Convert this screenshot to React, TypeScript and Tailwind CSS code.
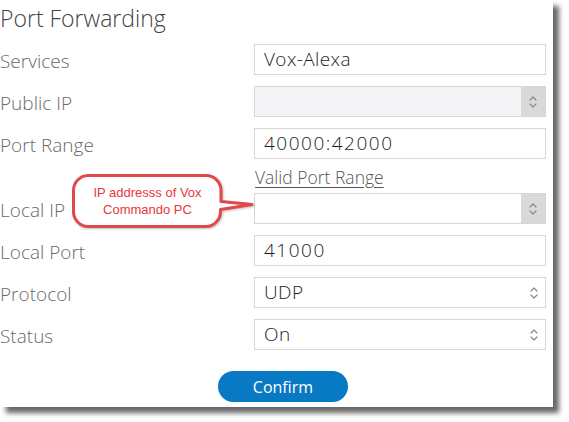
import React from "react";

const Arrows = () => (
  <svg width="10" height="18" viewBox="0 0 10 18" fill="none" stroke="#8a8a8a" strokeWidth="1.2" strokeLinecap="round" strokeLinejoin="round">
    <path d="M2 7 L5 4 L8 7" />
    <path d="M2 11 L5 14 L8 11" />
  </svg>
);

const Label = ({ children }: { children: React.ReactNode }) => (
  <div className="w-[254px] shrink-0 pt-[4px] text-[19px] font-light text-[#6a6a6a]" style={{ fontFamily: "'Open Sans', Lato, sans-serif" }}>
    {children}
  </div>
);

const TextInput = ({ value, numeric }: { value?: string; numeric?: boolean }) => (
  <div
    className={`w-[292px] h-[31px] border border-[#d6d6d6] bg-white flex items-center px-[9px] text-[19px] font-light text-[#1e1e1e] ${numeric ? "tracking-[1.5px]" : "tracking-[0.4px]"}`}
    style={{ fontFamily: "'Open Sans', Lato, sans-serif" }}
  >
    {value}
  </div>
);

const GraySelect = ({ disabled }: { disabled?: boolean }) => (
  <div className={`w-[292px] h-[31px] border border-[#d6d6d6] flex items-stretch ${disabled ? "bg-[#f4f4f6]" : "bg-white"}`}>
    <div className="flex-1" />
    <div className="w-[24px] bg-[#d9d9d9] flex items-center justify-center">
      <Arrows />
    </div>
  </div>
);

const Select = ({ value }: { value: string }) => (
  <div className="w-[292px] h-[31px] border border-[#d6d6d6] bg-white flex items-center pl-[9px] pr-[6px] text-[19px] font-light text-[#1e1e1e] tracking-[0.4px]" style={{ fontFamily: "'Open Sans', Lato, sans-serif" }}>
    <div className="flex-1">{value}</div>
    <Arrows />
  </div>
);

const Row = ({ label, children, className = "" }: { label: string; children: React.ReactNode; className?: string }) => (
  <div className={`flex items-center h-[31px] ${className}`}>
    <Label>{label}</Label>
    {children}
  </div>
);

export default function App() {
  return (
    <div className="w-[569px] h-[422px] bg-white relative overflow-hidden">
      <div className="w-[553px] h-[407px] bg-white shadow-[6px_6px_5px_rgba(0,0,0,0.6)] flex flex-col relative">
        <div className="h-[44px] pt-[3px] text-[23px] leading-[30px] font-light text-[#444]" style={{ fontFamily: "'Open Sans', Lato, sans-serif" }}>
          Port Forwarding
        </div>
        <Row label="Services">
          <TextInput value="Vox-Alexa" />
        </Row>
        <Row label="Public IP" className="mt-[11px]">
          <GraySelect disabled />
        </Row>
        <Row label="Port Range" className="mt-[11px]">
          <TextInput value="40000:42000" numeric />
        </Row>
        <div className="h-[34px] pl-[255px] pt-[5px]">
          <span className="text-[17.5px] font-light text-[#555] underline underline-offset-[3px]" style={{ fontFamily: "'Open Sans', Lato, sans-serif" }}>
            Valid Port Range
          </span>
        </div>
        <Row label="Local IP">
          <GraySelect />
        </Row>
        <Row label="Local Port" className="mt-[11px]">
          <TextInput value="41000" numeric />
        </Row>
        <Row label="Protocol" className="mt-[11px]">
          <Select value="UDP" />
        </Row>
        <Row label="Status" className="mt-[11px]">
          <Select value="On" />
        </Row>
        <div className="mt-[21px] pl-[218px]">
          <button className="w-[130px] h-[31px] rounded-full bg-[#0879c3] text-white text-[16px]" style={{ fontFamily: "'Open Sans', sans-serif" }}>
            Confirm
          </button>
        </div>

        {/* Callout */}
        <div className="absolute left-[70px] top-[172px] w-[186px] h-[58px]">
          <svg width="186" height="58" viewBox="0 0 186 58" className="absolute inset-0">
            <path
              d="M18 3.5 H136 A15 15 0 0 1 151 18.5 V29.5 L182 32.5 L150.5 37.5 V39.5 A15 15 0 0 1 136 54.5 H18 A15 15 0 0 1 3.5 39.5 V18.5 A15 15 0 0 1 18 3.5 Z"
              fill="white"
              stroke="#e2474a"
              strokeWidth="3"
              strokeLinejoin="round"
              style={{ filter: "drop-shadow(1px 1px 1px rgba(0,0,0,0.25))" }}
            />
          </svg>
          <div
            className="absolute left-[4px] top-[12px] w-[147px] text-center text-[13px] leading-[17px] text-[#e8373c]"
            style={{ fontFamily: "'Liberation Sans', Arial, sans-serif" }}
          >
            IP addresss of Vox
            <br />
            Commando PC
          </div>
        </div>
      </div>
    </div>
  );
}
